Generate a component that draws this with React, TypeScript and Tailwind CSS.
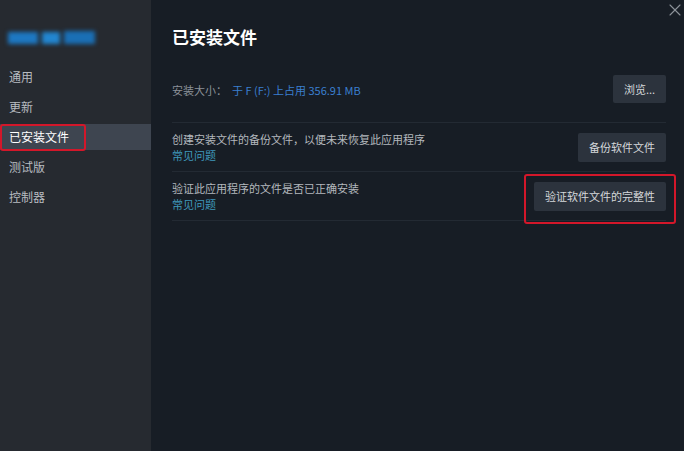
import { X } from "lucide-react";

const navItems = ["通用", "更新", "已安装文件", "测试版", "控制器"];

function Row({
  text,
  button,
  highlight,
}: {
  text: string;
  button: string;
  highlight?: boolean;
}) {
  return (
    <div className="flex h-[49px] items-center justify-between border-b border-[#232a33]">
      <div className="flex flex-col leading-[16px]">
        <span className="text-[11px] text-[#b3b8bd]">{text}</span>
        <span className="text-[11px] text-[#3f98bb]">常见问题</span>
      </div>
      <div className="relative">
        <button className="h-[29px] rounded-[2px] bg-[#2c333d] px-[11px] text-[11px] text-[#d4d7da]">
          {button}
        </button>
        {highlight && (
          <div className="absolute -left-[10px] -right-[10px] -top-[8px] -bottom-[13px] rounded-[3px] border-2 border-[#d3172a]" />
        )}
      </div>
    </div>
  );
}

export default function App() {
  return (
    <div
      className="flex h-[451px] w-[684px] overflow-hidden bg-[#171d25]"
      style={{ fontFamily: '"Noto Sans CJK SC", "Noto Sans", sans-serif' }}
    >
      <aside className="flex w-[151px] shrink-0 flex-col bg-[#262a30]">
        <div className="relative ml-[8px] mt-[29px] h-[16px] w-[88px] blur-[2px]">
          <div className="absolute left-0 top-[3px] h-[12px] w-[30px] bg-[#1d78c2]" />
          <div className="absolute left-[34px] top-[3px] h-[12px] w-[18px] bg-[#2286d0]" />
          <div className="absolute left-[56px] top-[2px] h-[13px] w-[31px] bg-[#1a6fb5]" />
        </div>
        <nav className="mt-[19px] flex flex-col gap-[4px]">
          {navItems.map((item) => (
            <div
              key={item}
              className={`relative flex h-[26px] items-center pl-[9px] text-[12px] ${
                item === "已安装文件"
                  ? "bg-[#3e4550] text-[#ffffff]"
                  : "text-[#b8bcc1]"
              }`}
            >
              {item}
              {item === "已安装文件" && (
                <div className="absolute left-0 top-0 h-[27px] w-[86px] rounded-[3px] border-2 border-[#d3172a]" />
              )}
            </div>
          ))}
        </nav>
      </aside>

      <main className="relative flex flex-1 flex-col pl-[21px] pr-[18px]">
        <X
          className="absolute -right-[1px] top-0 h-[20px] w-[20px] text-[#8d939a]"
          strokeWidth={1.3}
        />
        <h1 className="mt-[25px] text-[17px] font-bold leading-[24px] text-white">
          已安装文件
        </h1>

        <div className="mt-[26px] flex h-[48px] items-start justify-between border-b border-[#232a33]">
          <div className="mt-[7px] flex text-[11px]">
            <span className="text-[#8b9198]">安装大小：</span>
            <span className="ml-[5px] text-[#3a7fcf]">于 F (F:) 上占用 356.91 MB</span>
          </div>
          <button className="h-[28px] w-[53px] rounded-[2px] bg-[#2c333d] text-[11px] text-[#d4d7da]">
            浏览...
          </button>
        </div>

        <Row
          text="创建安装文件的备份文件，以便未来恢复此应用程序"
          button="备份软件文件"
        />
        <Row
          text="验证此应用程序的文件是否已正确安装"
          button="验证软件文件的完整性"
          highlight
        />
      </main>
    </div>
  );
}
